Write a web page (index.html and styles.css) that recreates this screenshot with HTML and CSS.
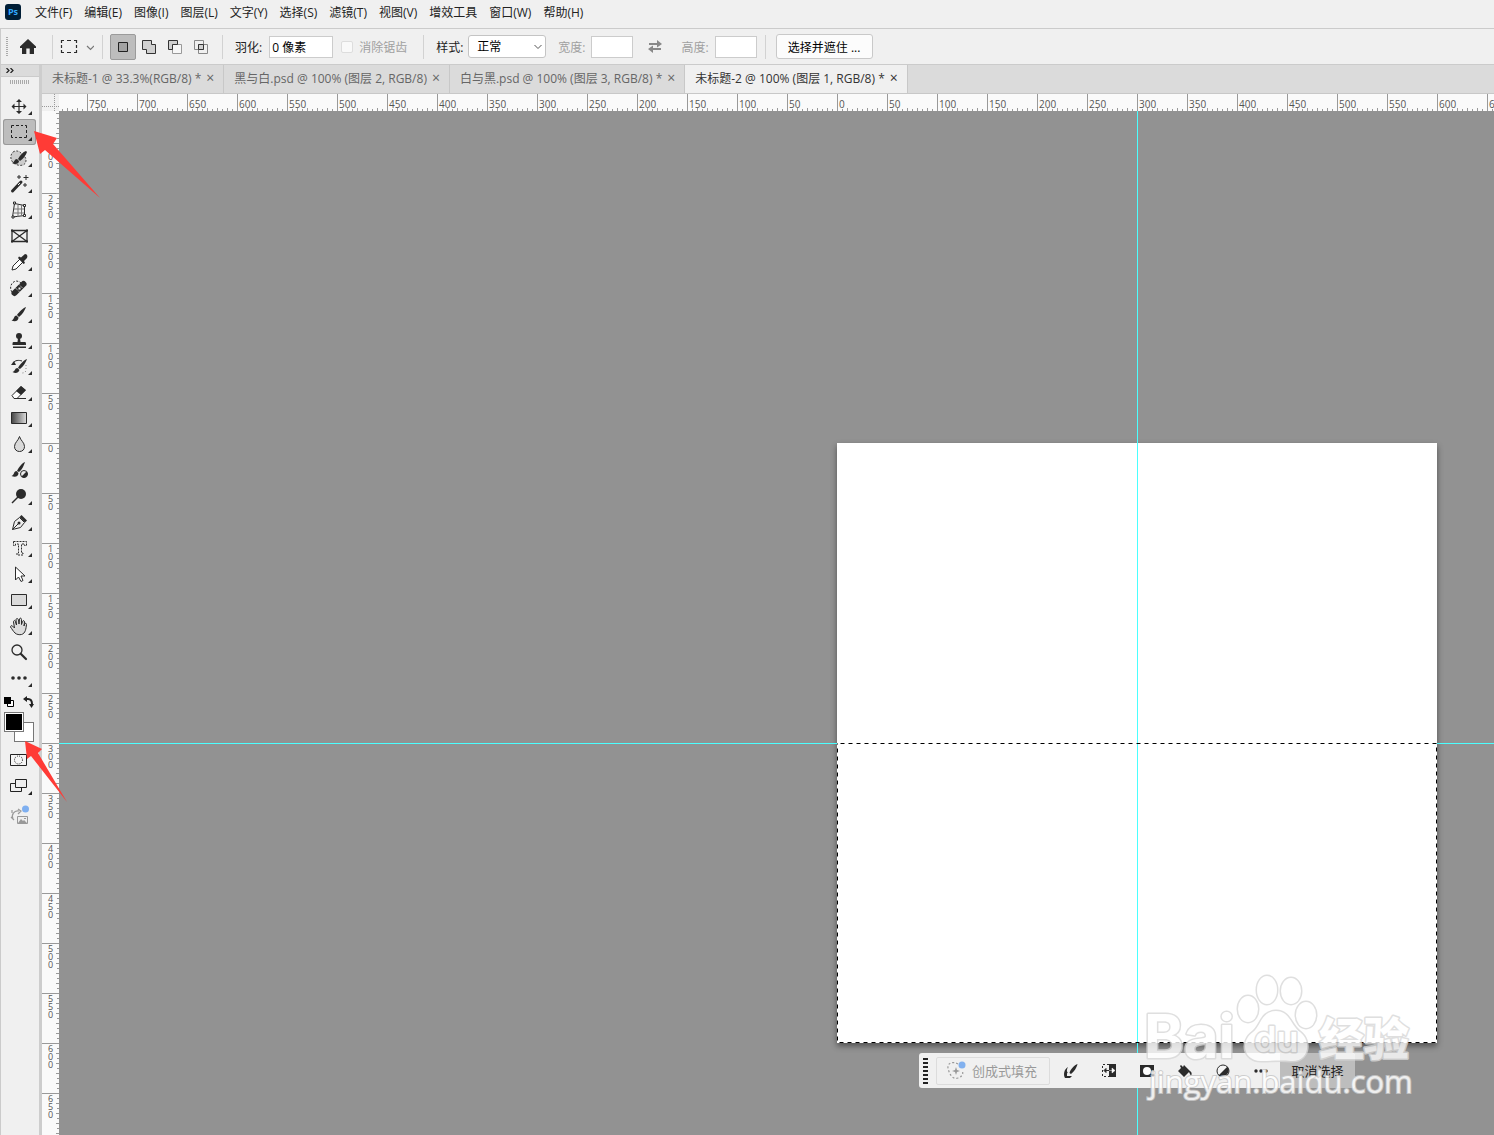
FILE: index.html
```html
<!DOCTYPE html>
<html lang="zh-CN">
<head>
    <meta charset="UTF-8">
    <meta name="viewport" content="width=device-width, initial-scale=1.0">
    <title>未标题-2 @ 100% (图层 1, RGB/8)</title>
    <link rel="stylesheet" href="styles.css">
</head>
<body>
    <nav class="menu-bar">
        <span class="app-logo">Ps</span>
        <button>文件(F)</button>
        <button>编辑(E)</button>
        <button>图像(I)</button>
        <button>图层(L)</button>
        <button>文字(Y)</button>
        <button>选择(S)</button>
        <button>滤镜(T)</button>
        <button>视图(V)</button>
        <button>增效工具</button>
        <button>窗口(W)</button>
        <button>帮助(H)</button>
    </nav>

    <!-- Options for the marquee tool -->
    <div class="options-bar">
        <div class="grip-v"></div>
        <button class="home" aria-label="主页"><svg width="16" height="15" viewBox="0 0 16 15"><path fill="#2b2b2b" d="M8 0 0 7.600V9h2v6h4.300V9.500h3.400V15H14V9h2V7.600z"/></svg></button>
        <div class="sep"></div>
        <button class="preset" aria-label="工具预设">
            <svg width="34" height="16" viewBox="0 0 34 16" fill="none" stroke="#2b2b2b"><path d="M1.500 4V1.500H4M7 1.500h4M14 1.500h2.500V4M16.500 6v3M16.500 11v2.500H14M11 13.500H7M4 13.500H1.500V11M1.500 9V6" stroke-width="1.200"/><path d="m27 7 3.500 3.500L34 7" stroke="#777" stroke-width="1.200"/></svg>
        </button>
        <div class="sep"></div>
        <div class="modes">
            <button class="on" aria-label="新选区"><svg width="16" height="16" viewBox="0 0 16 16"><path d="M3.500 3.500h9v9h-9z" fill="#a3a3a3" stroke="#222"/></svg></button>
            <button aria-label="添加到选区"><svg width="16" height="16" viewBox="0 0 16 16"><path d="M1.500 1.500h9v4h4v9h-9v-4h-4z" fill="#d0d0d0" stroke="#333"/></svg></button>
            <button aria-label="从选区减去"><svg width="16" height="16" viewBox="0 0 16 16"><path d="M5.500 5.500h9v9h-9z" fill="#f7f7f7" stroke="#999"/><path d="M1.500 1.500h9v4h-5v5h-4z" fill="#d0d0d0" stroke="#333"/></svg></button>
            <button aria-label="与选区交叉"><svg width="16" height="16" viewBox="0 0 16 16" fill="none"><path d="M1.500 1.500h9v9h-9zM5.500 5.500h9v9h-9z" stroke="#888"/><path d="M5.500 5.500h5v5h-5z" fill="#d0d0d0" stroke="#333"/></svg></button>
        </div>
        <div class="sep"></div>
        <label for="feather">羽化:</label>
        <input class="feather" type="text" id="feather" value="0 像素">
        <label class="check off"><input type="checkbox" disabled>消除锯齿</label>
        <div class="sep"></div>
        <label for="style">样式:</label>
        <div class="select-wrap">
            <select id="style">
                <option>正常</option>
                <option>固定比例</option>
                <option>固定大小</option>
            </select>
            <svg width="8" height="6" viewBox="0 0 8 6" fill="none" stroke="#555"><path d="m.5 1 3.500 3.500L7.500 1"/></svg>
        </div>
        <label class="off width-label" for="w">宽度:</label>
        <input class="size" type="text" id="w" disabled>
        <button class="swap" aria-label="互换"><svg width="14" height="13" viewBox="0 0 14 13" fill="#888"><path d="M1 3h8V0l5 4-5 3.500V5H1zM13 10H5v3L0 9l5-3.500V8h8z"/></svg></button>
        <label class="off" for="h">高度:</label>
        <input class="size" type="text" id="h" disabled>
        <div class="sep"></div>
        <button class="mask-button">选择并遮住 ...</button>
    </div>

    <div class="workspace">
        <aside class="toolbar">
            <div class="toolbar-head"><svg width="8" height="5" viewBox="0 0 8 5" fill="none" stroke="#222"><path d="m.5 0 2.500 2.500L.5 5M4.500 0 7 2.500 4.500 5" stroke-width="1.200"/></svg></div>
            <div class="grip-h"></div>
            <div class="tools">
                <button aria-label="移动工具"><svg viewBox="0 0 33 26"><path d="M16 7v13M9.500 13.500h13" stroke="#2b2b2b" stroke-width="1.200"/><path d="m16 6 3 3h-6zM16 21l3-3h-6zM8.500 13.500l3-3v6zM23.500 13.500l-3-3v6z"/><path d="M29 18v4h-4z"/></svg></button>
                <button class="on" aria-label="矩形选框工具"><svg viewBox="0 0 33 26"><path d="M8.500 9V6.500H11M13 6.500h3M18 6.500h2M22 6.500h1.500V9M23.500 11v3M23.500 16v2.500H21M19 18.500h-3M14 18.500h-2M10 18.500H8.500V16M8.500 14v-3" fill="none" stroke="#222"/><path d="M29 18v4h-4z"/></svg></button>
                <button aria-label="选择画笔工具"><svg viewBox="0 0 33 26"><path d="M10 7c3-2 6-1 8 1l4 4c2 3 1 7-2 8s-6 0-8-1c-4-2-6-8-2-12z" fill="#ccc" stroke="#444" stroke-dasharray="2 1.500"/><path d="M23 6c-3 1-6 4-8 8l2 2c3-2 6-6 7-9zM14 14c-3 0-2 3-5 4 3 2 7 1 7-2z"/><path d="M29 18v4h-4z"/></svg></button>
                <button aria-label="魔棒工具"><svg viewBox="0 0 33 26"><path d="M18 11 9.500 20" stroke="#2b2b2b" stroke-width="3" stroke-linecap="round"/><path d="m17 12-2 2" stroke="#eee"/><path d="M16 4v4M14 6h4M23 4v5M20.500 6.500h5M22 12v4M20 14h4" stroke="#2b2b2b"/><path d="M29 18v4h-4z"/></svg></button>
                <button aria-label="透视裁剪工具"><svg viewBox="0 0 33 26" fill="none" stroke="#2b2b2b"><path d="m11.500 6.500 10 2v10l-12 1.500z"/><path d="M15 8v12M18.500 8v11M11 12h10M10 16h11" stroke="#777"/><path d="M10.500 5h2v2h-2zM20.500 7.500h2v2h-2zM20.500 17.500h2v2h-2zM9 19h2v2H9z" fill="#fff"/><path d="M29 18v4h-4z" fill="#2b2b2b" stroke="none"/></svg></button>
                <button aria-label="图框工具"><svg viewBox="0 0 33 26" fill="none" stroke="#2b2b2b" stroke-width="1.300"><path d="M9 7.500h15v11H9zM9 7.500l15 11M24 7.500l-15 11"/><path d="M8 6.500h2v2H8zM23 6.500h2v2h-2zM8 17.500h2v2H8zM23 17.500h2v2h-2z" fill="#2b2b2b" stroke="none"/></svg></button>
                <button aria-label="吸管工具"><svg viewBox="0 0 33 26"><path d="m17 10-7 7-1 4 4-1 7-7z" fill="#fff" stroke="#2b2b2b"/><path d="M22 5c2 0 3 2 2 4l-3 3 1 2-1.500 1L15 9l1-1.500 2 1z"/><path d="M29 18v4h-4z"/></svg></button>
                <button aria-label="污点修复画笔工具"><svg viewBox="0 0 33 26"><path d="M9 17c-3-4-1-10 4-11 2 0 4 1 5 2" fill="none" stroke="#2b2b2b" stroke-dasharray="2 1.500"/><path d="M11.500 18 20.500 9" stroke="#2b2b2b" stroke-width="6" stroke-linecap="round"/><path d="m12.500 13 4 4M16 9.500l4 4" stroke="#eee" stroke-dasharray="1 1"/><path d="M15.500 12.500h2v2h-2z" fill="#eee"/><path d="M29 18v4h-4z"/></svg></button>
                <button aria-label="画笔工具"><svg viewBox="0 0 33 26"><path d="M23 6c-3 1-7 5-9 8l2 2c3-2 6-7 7-10zM13.500 14.500c-3 0-2 4-5 5 4 2 7 0 7-3z"/><path d="M29 18v4h-4z"/></svg></button>
                <button aria-label="仿制图章工具"><svg viewBox="0 0 33 26"><circle cx="16" cy="9" r="3"/><path d="M15 11h2l.5 4H22c1 0 1 1 1 3H9.500c0-2 0-3 1-3h4zM10 19.500h13v1.500H10z"/><path d="M29 18v4h-4z"/></svg></button>
                <button aria-label="历史记录画笔工具"><svg viewBox="0 0 33 26"><path d="M24 6c-3 1-7 5-9 9l2 1c3-2 6-7 7-10zM14.500 15c-3 0-2 3-5 4 3 2 6 1 7-2z"/><path d="M10 10c2-3 6-3 9-2" fill="none" stroke="#2b2b2b"/><path d="m8 12 3-4 2 4z"/><path d="M23 12v5c0 2-2 3-4 3" fill="none" stroke="#888" stroke-dasharray="1 2"/><path d="M29 18v4h-4z"/></svg></button>
                <button aria-label="橡皮擦工具"><svg viewBox="0 0 33 26"><path d="m9 16.500 9-9 4 4-8 8h-3z" fill="#fff" stroke="#2b2b2b"/><path d="m13 12 5-5 5 4-5 5zM12 19h11v1H12z"/><path d="M29 18v4h-4z"/></svg></button>
                <button aria-label="渐变工具"><svg viewBox="0 0 33 26"><defs><linearGradient id="grad"><stop stop-color="#444"/><stop offset="1" stop-color="#ddd"/></linearGradient></defs><path d="M8.500 7.500h15v11h-15z" fill="url(#grad)" stroke="#2b2b2b"/><path d="M29 18v4h-4z"/></svg></button>
                <button aria-label="模糊工具"><svg viewBox="0 0 33 26"><path d="M16.500 5.500c1 4 5 6 5 10 0 3-2 5-5 5s-5-2-5-5c0-4 4-6 5-10z" fill="#d9d9d9" stroke="#2b2b2b"/><path d="M29 18v4h-4z"/></svg></button>
                <button aria-label="调整画笔工具"><svg viewBox="0 0 33 26"><path d="M22 5c-3 1-6 5-8 9l2 1c3-2 5-7 6-10zM13.500 14c-3 0-2 4-5 5 4 2 7 0 7-3z"/><circle cx="21" cy="17" r="3.500" fill="#eee" stroke="#2b2b2b"/><path d="M18.500 19.500 23.500 14.500a3.500 3.500 0 0 1-5 5z"/></svg></button>
                <button aria-label="减淡工具"><svg viewBox="0 0 33 26"><circle cx="18" cy="11" r="5"/><path d="m15 14-6 6" stroke="#2b2b2b" stroke-width="1.500"/><path d="M29 18v4h-4z"/></svg></button>
                <button aria-label="钢笔工具"><svg viewBox="0 0 33 26"><path d="m9.500 20.500 2-8 5-4 5 5-4 5z" fill="#eee" stroke="#2b2b2b"/><path d="m9.500 20.500 6-6" stroke="#2b2b2b"/><circle cx="16" cy="14" r="1.500"/><path d="m18.500 6 5.500 5.500-2 2L16.500 8z"/><path d="M29 18v4h-4z"/></svg></button>
                <button aria-label="横排文字蒙版工具"><svg viewBox="0 0 33 26"><path d="M10.500 6.500h13v4h-2v-1.500H18.500v9H20v2h-6v-2h1.500V9H12.500v1.500h-2z" fill="none" stroke="#2b2b2b" stroke-dasharray="2 1"/><path d="M29 18v4h-4z"/></svg></button>
                <button aria-label="直接选择工具"><svg viewBox="0 0 33 26"><path d="M12.500 6v13l3-3 2.500 4.500 2-1-2-4.500h4z" fill="#fff" stroke="#2b2b2b"/><path d="M29 18v4h-4z"/></svg></button>
                <button aria-label="矩形工具"><svg viewBox="0 0 33 26"><path d="M8.500 7.500h15v11h-15z" fill="#dadada" stroke="#2b2b2b"/><path d="M29 18v4h-4z"/></svg></button>
                <button aria-label="抓手工具"><svg viewBox="0 0 33 26"><path d="M12 20c-2-2-3-4-4.500-6 0-1 1-2 2-1l2 2-1-6c0-2 2-2 2 0l1 3-.5-5c0-2 2-2 2.500 0l.5 4 .5-5c.5-1.500 2-1 2 .5v5l1-3c.5-1.500 2-1 2 .5l-.5 4 .5-2c.5-1 2-1 2 .5-.5 4-1 9-5 10-2 .5-5 0-6.500-1.500z" fill="#ddd" stroke="#2b2b2b"/><path d="M29 18v4h-4z"/></svg></button>
                <button aria-label="缩放工具"><svg viewBox="0 0 33 26" fill="none" stroke="#2b2b2b"><circle cx="14" cy="11" r="5" stroke-width="1.300"/><path d="m18 15 5 5" stroke-width="2.200" stroke-linecap="round"/></svg></button>
                <button aria-label="编辑工具栏"><svg viewBox="0 0 33 26"><circle cx="10" cy="13" r="1.800"/><circle cx="16" cy="13" r="1.800"/><circle cx="22" cy="13" r="1.800"/><path d="M29 18v4h-4z"/></svg></button>
            </div>
            <div class="swatch-actions">
                <button aria-label="默认颜色"><svg width="10" height="10" viewBox="0 0 10 10"><path d="M3.500 3.500h6v6h-6z" fill="#fff" stroke="#000"/><path d="M0 0h7v7H0z"/></svg></button>
                <button aria-label="切换颜色"><svg width="11" height="12" viewBox="0 0 11 12"><path d="M3 3h2c3 0 4 2 4 5" fill="none" stroke="#222" stroke-width="2"/><path d="M0 3l4-3v6zM6 8h5l-2.500 4z" fill="#222"/></svg></button>
            </div>
            <div class="swatches">
                <span class="back"></span>
                <span class="front"></span>
            </div>
            <div class="tools extra">
                <button aria-label="快速蒙版"><svg viewBox="0 0 33 26"><path d="M7.500 7.500h16v11h-16z" fill="#f5f5f5" stroke="#222"/><circle cx="15.500" cy="13" r="4" fill="none" stroke="#222" stroke-dasharray="1 1.100"/></svg></button>
                <button aria-label="屏幕模式"><svg viewBox="0 0 33 26" fill="#eee" stroke="#222"><path d="M7.500 10.500h11v8h-11z"/><path d="M12.500 6.500h11v8h-11z"/><path d="M29 18v4h-4z" fill="#222" stroke="none"/></svg></button>
                <button aria-label="生成图像"><svg viewBox="0 0 33 26"><path d="M10 17C8 13 11 8 16 9M9 8v3M15 7l3 2-3 3M8 15l3 3" fill="none" stroke="#999" stroke-width="1.200"/><path d="M14.500 14.500h10v7h-10z" fill="#eee" stroke="#999"/><path d="m15 21 3-4 2 2 1-1 3 3zM21 16h2v1h-2z" fill="#999"/><circle cx="22.500" cy="7" r="3.500" fill="#7eaff0"/></svg></button>
            </div>
        </aside>

        <main class="document">
            <div class="tabs">
                <div class="tab"><span>未标题-1 @ 33.3%(RGB/8) *</span><button aria-label="关闭">×</button></div>
                <div class="tab"><span>黑与白.psd @ 100% (图层 2, RGB/8)</span><button aria-label="关闭">×</button></div>
                <div class="tab"><span>白与黑.psd @ 100% (图层 3, RGB/8) *</span><button aria-label="关闭">×</button></div>
                <div class="tab current"><span>未标题-2 @ 100% (图层 1, RGB/8) *</span><button aria-label="关闭">×</button></div>
            </div>
            <div class="view">
                <div class="ruler-corner"></div>
                <div class="ruler-h">
                    <span>750</span><span>700</span><span>650</span><span>600</span><span>550</span><span>500</span><span>450</span><span>400</span><span>350</span><span>300</span><span>250</span><span>200</span><span>150</span><span>100</span><span>50</span><span>0</span><span>50</span><span>100</span><span>150</span><span>200</span><span>250</span><span>300</span><span>350</span><span>400</span><span>450</span><span>500</span><span>550</span><span>600</span><span>650</span>
                </div>
                <div class="ruler-v">
                    <span><b>300</b></span><span><b>250</b></span><span><b>200</b></span><span><b>150</b></span><span><b>100</b></span><span><b>50</b></span><span><b>0</b></span><span><b>50</b></span><span><b>100</b></span><span><b>150</b></span><span><b>200</b></span><span><b>250</b></span><span><b>300</b></span><span><b>350</b></span><span><b>400</b></span><span><b>450</b></span><span><b>500</b></span><span><b>550</b></span><span><b>600</b></span><span><b>650</b></span>
                </div>
                <div class="canvas">
                    <div class="paper"></div>
                    <div class="guide-v"></div>
                    <div class="guide-h"></div>
                    <svg class="selection" width="600" height="300" viewBox="0 0 600 300"><path class="under" d="M.5.500h599v299H.5z"/><path class="ants" d="M.5.500h599v299H.5z"/></svg>

                    <!-- Contextual task bar -->
                    <div class="task-bar">
                        <div class="task-grip"></div>
                        <button class="fill-button" disabled>
                            <svg width="20" height="20" viewBox="0 0 20 20"><path d="M12 3C7 0 1 2 2 7s4 12 10 10 5-6 4-8" fill="none" stroke="#999" stroke-width="1.200" stroke-dasharray="2 2"/><path d="m10 6 1 3 3 1-3 1-1 3-1-3-3-1 3-1z" fill="#999"/><circle cx="16" cy="4" r="3.500" fill="#82b1ef"/></svg>
                            创成式填充
                        </button>
                        <button class="task" aria-label="修改选区"><svg viewBox="0 0 16 16"><path d="M14.500 1c-3 1-7 5-8 9l1.500 1c3-2 6-7 6.500-10zM5 10c-1-1-1 1-1 3h5l-2 2H2c-2-3-1-9 3-11-1 2-2 4 0 6z"/></svg></button>
                        <button class="task" aria-label="反相选区"><svg viewBox="0 0 16 16"><path d="M8 1h7v13H8z"/><path d="M8 1.500H1.500v12H8" fill="none" stroke="#2b2b2b" stroke-dasharray="2 2"/><path d="M4 7.500h4M3 7.500l2-2v4z" stroke="#2b2b2b"/><path d="M8 7.500h4M11 5l3 2.500-3 2.500z" fill="#fff" stroke="#fff" stroke-width=".5"/></svg></button>
                        <button class="task" aria-label="创建蒙版"><svg viewBox="0 0 16 16"><path d="M1 2h14v12H1z"/><circle cx="8" cy="8" r="4" fill="#fff"/></svg></button>
                        <button class="task" aria-label="填充选区"><svg viewBox="0 0 16 16"><path d="m7 2 6 6-6 6-6-6 3-3-1-2 1-1 2 2zM13 8c2 1 2 3 1 5l-2-4z"/></svg></button>
                        <button class="task" aria-label="调整图层"><svg viewBox="0 0 16 16"><circle cx="8" cy="8" r="6" fill="#f4f4f4" stroke="#2b2b2b"/><path d="M3.500 12.500 12.500 3.500a6.500 6.500 0 0 1-9 9z"/></svg></button>
                        <button class="task" aria-label="更多选项"><svg viewBox="0 0 16 16"><circle cx="3" cy="8" r="1.700"/><circle cx="8" cy="8" r="1.700"/><circle cx="13" cy="8" r="1.700"/></svg></button>
                        <button class="deselect">取消选择</button>
                    </div>

                    <svg class="watermark" width="280" height="140" viewBox="0 0 280 140">
                        <g class="mark">
                            <text class="bai" x="6" y="87">Bai</text>
                            <path d="M138 40c-15 0-15 15-23 21-13 9-10 29 8 29 10 0 20-1 30 0 18 1 21-20 9-29-9-6-10-21-24-21z"/>
                            <ellipse cx="110" cy="38" rx="10" ry="13"/>
                            <ellipse cx="129" cy="19" rx="10" ry="14"/>
                            <ellipse cx="153" cy="20" rx="10" ry="13"/>
                            <ellipse cx="168" cy="44" rx="10" ry="13"/>
                            <text class="du" x="116" y="81">du</text>
                            <text class="jingyan" x="181" y="85">经验</text>
                        </g>
                        <text class="url" x="11" y="122">jingyan.baidu.com</text>
                    </svg>
                </div>
            </div>
        </main>
    </div>

    <svg class="arrow arrow-tool" width="66" height="68" viewBox="0 0 66 68"><path d="M0 1l23 7-4 6 47 54-55-48-5 4z"/></svg>
    <svg class="arrow arrow-color" width="42" height="61" viewBox="0 0 42 61"><path d="M0 0l17 8-4 4 29 49L6 15l-4 3z"/></svg>
</body>
</html>
```

FILE: styles.css
```css
* {
    box-sizing: border-box;
}
body {
    margin: 0;
    height: 100vh;
    display: flex;
    flex-direction: column;
    overflow: hidden;
    background: #f0f0f0;
    color: #222;
    font-family: "Open Sans", "Noto Sans CJK SC", sans-serif;
    font-size: 12px;
}
button, input, select {
    font: inherit;
    color: inherit;
}
button {
    border: 0;
    padding: 0;
    background: none;
}
svg {
    display: block;
}

/* Menu */
.menu-bar {
    display: flex;
    align-items: center;
    gap: 12px;
    height: 28px;
    padding: 0 5px 5px;
    flex: none;
}
.app-logo {
    width: 16px;
    height: 16px;
    margin-right: 2px;
    border-radius: 3px;
    background: #001e36;
    color: #31a8ff;
    font-size: 9px;
    font-weight: bold;
    line-height: 15px;
    text-align: center;
}

/* Options bar */
.options-bar {
    display: flex;
    align-items: center;
    height: 37px;
    padding-left: 5px;
    border-top: 1px solid #cbcbcb;
    border-bottom: 1px solid #cbcbcb;
    border-left: 1px solid #cbcbcb;
    flex: none;
}
.grip-v {
    width: 2px;
    height: 20px;
    background: repeating-linear-gradient(#aaa 0 1px, transparent 1px 2px);
}
.home {
    margin: 0 16px 0 12px;
}
.sep {
    width: 1px;
    height: 24px;
    background: #d2d2d2;
}
.preset {
    margin: 0 8px 0 7px;
}
.modes {
    display: flex;
    margin: 0 8px 0 7px;
}
.modes button {
    display: flex;
    align-items: center;
    justify-content: center;
    width: 26px;
    height: 26px;
}
.modes .on {
    border: 1px solid #9b9b9b;
    border-radius: 2px;
    background: #bdbdbd;
}
.options-bar label {
    margin-left: 12px;
}
.options-bar .off {
    color: #a0a0a0;
}
.options-bar input[type="text"] {
    height: 22px;
    padding: 0 2px;
    border: 1px solid #ccc;
    background: #fff;
    color: #000;
}
.options-bar .feather {
    width: 64px;
    margin-left: 7px;
}
.options-bar .size {
    width: 42px;
    margin-left: 6px;
    border-color: #dcdcdc;
}
.options-bar .check {
    display: flex;
    align-items: center;
    gap: 6px;
    margin: 0 16px 0 8px;
}
.check input {
    appearance: none;
    width: 12px;
    height: 12px;
    margin: 0;
    border: 1px solid #ddd;
    border-radius: 2px;
    background: #f9f9f9;
}
.select-wrap {
    position: relative;
    margin-left: 5px;
}
.select-wrap select {
    display: block;
    appearance: none;
    width: 78px;
    height: 23px;
    padding: 0 8px;
    border: 1px solid #c4c4c4;
    border-radius: 3px;
    background: #fff;
    color: #000;
}
.select-wrap svg {
    position: absolute;
    right: 4px;
    top: 9px;
}
.swap {
    margin: 0 7px 0 15px;
}
.size + .sep {
    margin-left: 8px;
}
.mask-button {
    width: 97px;
    height: 25px;
    margin-left: 10px;
    border: 1px solid #c9c9c9;
    border-radius: 3px;
    background: #fcfcfc;
    color: #000;
}

/* Toolbar */
.workspace {
    display: flex;
    flex: 1;
    min-height: 0;
}
.toolbar {
    width: 42px;
    border-left: 1px solid #cbcbcb;
    border-right: 3px solid #cdcdcd;
    flex: none;
}
.toolbar-head {
    height: 12px;
    padding: 3px 5px;
    border-bottom: 1px solid #cbcbcb;
    background: #dbdbdb;
}
.grip-h {
    width: 20px;
    height: 4px;
    margin: 3px 0 9px 9px;
    background: repeating-linear-gradient(90deg, #aaa 0 1px, transparent 1px 2px);
}
.tools {
    display: flex;
    flex-direction: column;
    padding-left: 2px;
}
.tools button {
    width: 33px;
    height: 26px;
}
.tools svg {
    width: 33px;
    height: 26px;
}
.tools svg:not([fill]), .task svg {
    fill: #2b2b2b;
}
.tools .on {
    border-radius: 3px;
    background: #bdbdbd;
    box-shadow: inset 0 0 0 1px #999;
}
.swatch-actions {
    display: flex;
    gap: 9px;
    padding: 5px 0 4px 3px;
}
.swatches {
    display: grid;
    width: 30px;
    height: 30px;
    margin-left: 3px;
}
.swatches span {
    grid-area: 1 / 1;
    width: 20px;
    height: 20px;
    border: 1px solid #777;
}
.front {
    background: #000;
    box-shadow: inset 0 0 0 1px #fff;
}
.back {
    place-self: end;
    background: #fff;
}
.extra {
    padding-top: 5px;
}
.extra button:last-child {
    margin-top: 3px;
}

/* Document window */
.document {
    display: flex;
    flex-direction: column;
    flex: 1;
    min-width: 0;
}
.tabs {
    display: flex;
    height: 29px;
    background: #dbdbdb;
    border-bottom: 1px solid #c8c8c8;
    color: #666;
    flex: none;
}
.tab {
    display: flex;
    align-items: center;
    gap: 5px;
    padding: 0 9px 2px 10px;
    border-right: 1px solid #c8c8c8;
    white-space: nowrap;
}
.tab button {
    width: 8px;
    font-size: 14px;
    line-height: 16px;
}
.tab.current {
    background: #f0f0f0;
    color: #333;
}
.view {
    display: grid;
    grid-template: 17px 1fr / 17px 1fr;
    flex: 1;
    min-height: 0;
}
.ruler-corner {
    background:
        repeating-linear-gradient(90deg, #999 0 1px, transparent 1px 2px) 0 12px / 100% 1px no-repeat,
        repeating-linear-gradient(#999 0 1px, transparent 1px 2px) 12px 0 / 1px 100% no-repeat,
        #f0f0f0;
}
.ruler-h, .ruler-v {
    overflow: hidden;
    color: #555;
    font-size: 10px;
}
.ruler-h {
    display: flex;
    padding-left: 28px;
    background:
        repeating-linear-gradient(90deg, #999 0 1px, transparent 1px 10px) 8px 100% / 100% 3px no-repeat,
        repeating-linear-gradient(90deg, #999 0 1px, transparent 1px 10px) 3px 100% / 100% 2px no-repeat,
        #fafafa;
}
.ruler-h span {
    width: 50px;
    padding-left: 1px;
    border-left: 1px solid #999;
    line-height: 20px;
    flex: none;
}
.ruler-v {
    padding-top: 32px;
    background:
        repeating-linear-gradient(#999 0 1px, transparent 1px 10px) 100% 2px / 3px 100% no-repeat,
        repeating-linear-gradient(#999 0 1px, transparent 1px 10px) 100% 7px / 2px 100% no-repeat,
        #fafafa;
}
.ruler-v span {
    display: block;
    height: 50px;
    padding: 1px 0 0 6px;
    border-top: 1px solid #999;
}
.ruler-v b {
    display: block;
    width: 1px;
    font-size: 9px;
    font-weight: normal;
    line-height: 8px;
    word-break: break-all;
}

/* Everything below is placed on the free canvas */
.canvas {
    position: relative;
    overflow: hidden;
    background: #929292;
}
.paper {
    position: absolute;
    left: 778px;
    top: 332px;
    width: 600px;
    height: 600px;
    background: #fff;
    box-shadow: 0 3px 6px rgba(0, 0, 0, .45);
}
.guide-v {
    position: absolute;
    left: 1078px;
    top: 0;
    bottom: 0;
    width: 1px;
    background: #4affff;
}
.guide-h {
    position: absolute;
    left: 0;
    right: 0;
    top: 632px;
    height: 1px;
    background: #4affff;
}
.selection {
    position: absolute;
    left: 778px;
    top: 632px;
    fill: none;
}
.under {
    stroke: #fff;
}
.ants {
    stroke: #000;
    stroke-dasharray: 4 4;
    stroke-dashoffset: 5;
}
.task-bar {
    position: absolute;
    left: 860px;
    top: 942px;
    display: flex;
    align-items: center;
    height: 35px;
    padding-left: 4px;
    border-radius: 3px;
    background: #f0f0f0;
    overflow: hidden;
}
.task-grip {
    width: 5px;
    height: 26px;
    margin-right: 8px;
    background: repeating-linear-gradient(#222 0 2px, transparent 2px 4px);
}
.fill-button {
    display: flex;
    align-items: center;
    gap: 6px;
    width: 114px;
    height: 28px;
    margin-right: 2px;
    padding-left: 9px;
    border: 1px solid #dcdcdc;
    border-radius: 2px;
    color: #999;
    font-size: 13px;
    white-space: nowrap;
}
.task {
    width: 38px;
    height: 35px;
    padding: 0 11px;
}
.task svg {
    width: 16px;
    height: 16px;
}
.deselect {
    width: 75px;
    height: 35px;
    background: #bdbdbd;
    font-size: 13px;
}
.watermark {
    position: absolute;
    left: 1079px;
    top: 860px;
}
.mark {
    fill: #fff;
    stroke: #d8d8d8;
    stroke-width: 3px;
    stroke-linejoin: round;
    paint-order: stroke;
    opacity: .8;
}
.bai {
    font: bold 60px Inter, sans-serif;
}
.du {
    font: 600 36px Inter, sans-serif;
}
.jingyan {
    font: 900 45px "Noto Sans CJK SC", sans-serif;
}
.url {
    fill: #fff;
    stroke: #c8c8c8;
    stroke-width: 2px;
    paint-order: stroke;
    font-size: 31px;
    opacity: .85;
}

/* Red pointers over the toolbar */
.arrow {
    position: absolute;
    fill: #ff3b36;
}
.arrow-tool {
    left: 34px;
    top: 130px;
}
.arrow-color {
    left: 25px;
    top: 741px;
}
```
